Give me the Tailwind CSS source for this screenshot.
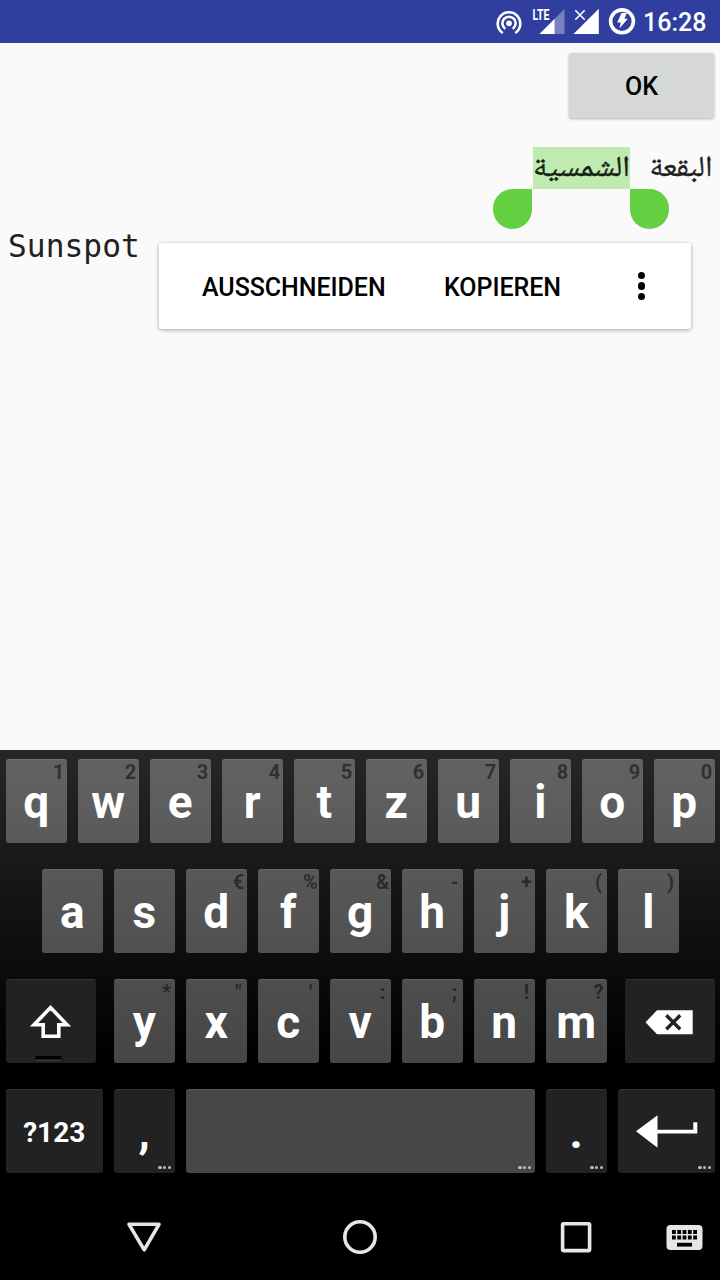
<!DOCTYPE html>
<html lang="de">
<head>
<meta charset="utf-8">
<title>Sunspot</title>
<script src="https://cdn.jsdelivr.net/npm/@tailwindcss/browser@4"></script>
</head>
<body class="bg-[#fafafa]">
<div class="w-[720px] h-[1280px] flex flex-col overflow-hidden font-['Roboto',sans-serif] text-black">
  <header class="h-[43px] shrink-0 bg-[#303f9f] text-white flex">
    <svg class="w-[160px] h-[43px] ml-[480px]" viewBox="480 0 160 43" fill="none">
      <g stroke="#fff" stroke-width="2.6">
        <path d="M502.8 33A11.3 11.3 0 1 1 515.2 33"/>
        <path d="M505.3 28.8A6.6 6.6 0 1 1 512.7 28.8"/>
      </g>
      <circle cx="509" cy="23.3" r="2.9" fill="#fff"/>
      <path d="M539.5 34L564.5 9V34Z" fill="#fff" fill-opacity=".35"/>
      <path d="M539.5 34L554.5 19V34Z" fill="#fff"/>
      <text x="532.5" y="19.8" fill="#fff" font-size="15" font-weight="700" textLength="17" lengthAdjust="spacingAndGlyphs">LTE</text>
      <path d="M573.5 34L598.8 8.7V34Z" fill="#fff"/>
      <path d="M575.3 10.3L584.7 19.7M584.7 10.3L575.3 19.7" stroke="#fff" stroke-width="1.6"/>
      <circle cx="622" cy="21.3" r="11.4" stroke="#fff" stroke-width="3.6"/>
      <path d="M621.5 13H626.7L624.4 18.8H627.8L619.4 28.4L620.8 22.4H617.2Z" fill="#fff"/>
    </svg>
    <span class="ml-[3px] mt-[7px] text-[25px] leading-[31px] font-medium whitespace-nowrap">16:28</span>
  </header>

  <main class="h-[707px] shrink-0 flex flex-col relative">
    <button class="self-end mt-[10px] mr-[6px] w-[145px] h-[65px] rounded-[3px] bg-[#d6d7d7] shadow-[0_1px_3px_rgba(0,0,0,0.3)] text-[25px] leading-[64px] font-medium pt-[2px]">OK</button>
    <div dir="rtl" lang="ar" class="mt-[29px] h-[42px] pr-[8px] flex gap-[20px] text-[#202020] text-[28px] leading-[42px]">
      <svg class="w-[62px] h-[42px] shrink-0 overflow-visible font-['Noto_Naskh_Arabic','Noto_Sans_Arabic','DejaVu_Sans',sans-serif]"><text x="62.5" y="29" fill="#202020" stroke="#202020" stroke-width=".35" font-size="29" textLength="63" lengthAdjust="spacingAndGlyphs">البقعة</text></svg>
      <svg class="w-[97px] h-[42px] shrink-0 bg-[#bfeab0] overflow-visible font-['Noto_Naskh_Arabic','Noto_Sans_Arabic','DejaVu_Sans',sans-serif]"><text x="97" y="29" fill="#142010" stroke="#142010" stroke-width=".35" font-size="29" textLength="97" lengthAdjust="spacingAndGlyphs">الشمسية</text></svg>
    </div>
    <div class="absolute left-[493px] top-[146px] w-[39px] h-[40px] rounded-full rounded-tr-none bg-[#63d041]"></div>
    <div class="absolute left-[630px] top-[146px] w-[39px] h-[40px] rounded-full rounded-tl-none bg-[#63d041]"></div>
    <p class="mt-[37px] ml-[8px] font-['DejaVu_Sans_Mono',monospace] text-[31.2px] leading-[40px] tracking-[0.05px] text-[#212121]">Sunspot</p>
    <div class="absolute left-[159px] top-[200px] w-[532px] h-[86px] rounded-[3px] bg-white shadow-[0_1px_4px_rgba(0,0,0,0.35)] flex items-center pl-[43px] pt-[3px] text-[25px] font-medium tracking-[-0.05px]">
      <span class="w-[242px] pt-px">AUSSCHNEIDEN</span>
      <span class="w-[193px] pt-px">KOPIEREN</span>
      <span class="flex flex-col gap-[3.4px] -mt-[3px] ml-[0.5px]"><i class="size-[7.4px] rounded-full bg-black"></i><i class="size-[7.4px] rounded-full bg-black"></i><i class="size-[7.4px] rounded-full bg-black"></i></span>
    </div>
  </main>

  <section id="keyboard" class="h-[445px] shrink-0 pt-[9px] pl-[5.5px] bg-black bg-[linear-gradient(#272727,#000_310px)] flex flex-col gap-[26px]"></section>

  <nav class="h-[85px] shrink-0 bg-black">
    <svg class="w-[720px] h-[85px]" viewBox="0 1195 720 85" fill="none" stroke="#e6e6e6" stroke-width="3.6" stroke-linejoin="round">
      <path d="M129 1224.3H159L144.2 1249.8Z"/>
      <circle cx="360" cy="1237" r="15.2"/>
      <rect x="562.6" y="1223.8" width="27" height="26.8" rx="1"/>
      <rect x="666.5" y="1225" width="36" height="25" rx="4" fill="#e6e6e6" stroke="none"/>
      <path d="M672 1232H697.5M672 1237.5H697.5" stroke="#000" stroke-width="3.8" stroke-dasharray="3.8 1.5"/>
      <path d="M677 1244.7H692" stroke="#000" stroke-width="3.8"/>
    </svg>
  </nav>
</div>

<script>
const LIGHT = 'relative shrink-0 h-[84px] w-[61.5px] rounded-[3px] bg-white/28 border-t border-white/10 flex justify-center text-white font-bold text-[46px] leading-[84px]';
const DARK = 'relative shrink-0 h-[84px] rounded-[3px] bg-[#222222] border-t border-[#333333] flex justify-center text-white font-bold';
const HINT = 'absolute right-0 top-0 w-[17px] flex justify-center whitespace-nowrap text-[20px] leading-[24px] text-black/50';
const MORE = '<span class="absolute right-[4px] bottom-[4px] flex gap-[1.2px]"><i class="size-[3.4px] rounded-full bg-[#bbbbbb]"></i><i class="size-[3.4px] rounded-full bg-[#bbbbbb]"></i><i class="size-[3.4px] rounded-full bg-[#bbbbbb]"></i></span>';
const key = ([c, h]) => `<div class="${LIGHT}"><span>${c}</span>${h ? `<span class="${HINT}">${h}</span>` : ''}</div>`;
const row = (pad, inner) => `<div class="flex gap-[10.5px] ${pad}">${inner}</div>`;

const r1 = [['q','1'],['w','2'],['e','3'],['r','4'],['t','5'],['z','6'],['u','7'],['i','8'],['o','9'],['p','0']];
const r2 = [['a'],['s'],['d','€'],['f','%'],['g','&amp;'],['h','-'],['j','+'],['k','('],['l',')']];
const r3 = [['y','*'],['x','"'],['c',"'"],['v',':'],['b',';'],['n','!'],['m','?']];

const shift = `<div class="${DARK} w-[90px] mr-[7.5px]"><svg class="w-[90px] h-[83px] shrink-0" viewBox="5.5 980 90 83" fill="none">
  <path d="M50 1007.6L66.5 1024.8H58.3V1036.3H42.7V1024.8H33.5Z" stroke="#fff" stroke-width="3.6"/>
  <rect x="35" y="1056" width="26" height="3.6" fill="#000"/><path d="M35 1060.2H61" stroke="#444" stroke-width="1"/></svg></div>`;
const back = `<div class="${DARK} w-[90px] ml-[7.5px]"><svg class="w-[90px] h-[83px] shrink-0" viewBox="625 980 90 83">
  <path d="M645.5 1022.3L657 1010.3H692.7V1034.2H657Z" fill="#fff"/>
  <path d="M666.3 1015.3L680.2 1029.2M680.2 1015.3L666.3 1029.2" stroke="#222" stroke-width="3.4"/></svg></div>`;
const enter = `<div class="${DARK} w-[97.5px]"><svg class="w-[97.5px] h-[83px] shrink-0" viewBox="617.5 1090 97.5 83">
  <path d="M635.5 1131.3L657 1115.3V1129.7H692.8V1122.3H696.8V1133.4H657V1147.7Z" fill="#fff"/></svg>${MORE}</div>`;
const bottom = `<div class="${DARK} w-[97.5px] text-[28px] leading-[85px]"><span>?123</span></div>
  <div class="${DARK} w-[61.5px] text-[46px] leading-[84px]"><span>,</span>${MORE}</div>
  <div class="${LIGHT} w-[349.5px]!">${MORE}</div>
  <div class="${DARK} w-[61.5px] text-[46px] leading-[84px]"><span>.</span>${MORE}</div>${enter}`;

document.getElementById('keyboard').innerHTML =
  row('', r1.map(key).join('')) + row('pl-[36px]', r2.map(key).join('')) +
  row('', shift + r3.map(key).join('') + back) + row('', bottom);
</script>
</body>
</html>
